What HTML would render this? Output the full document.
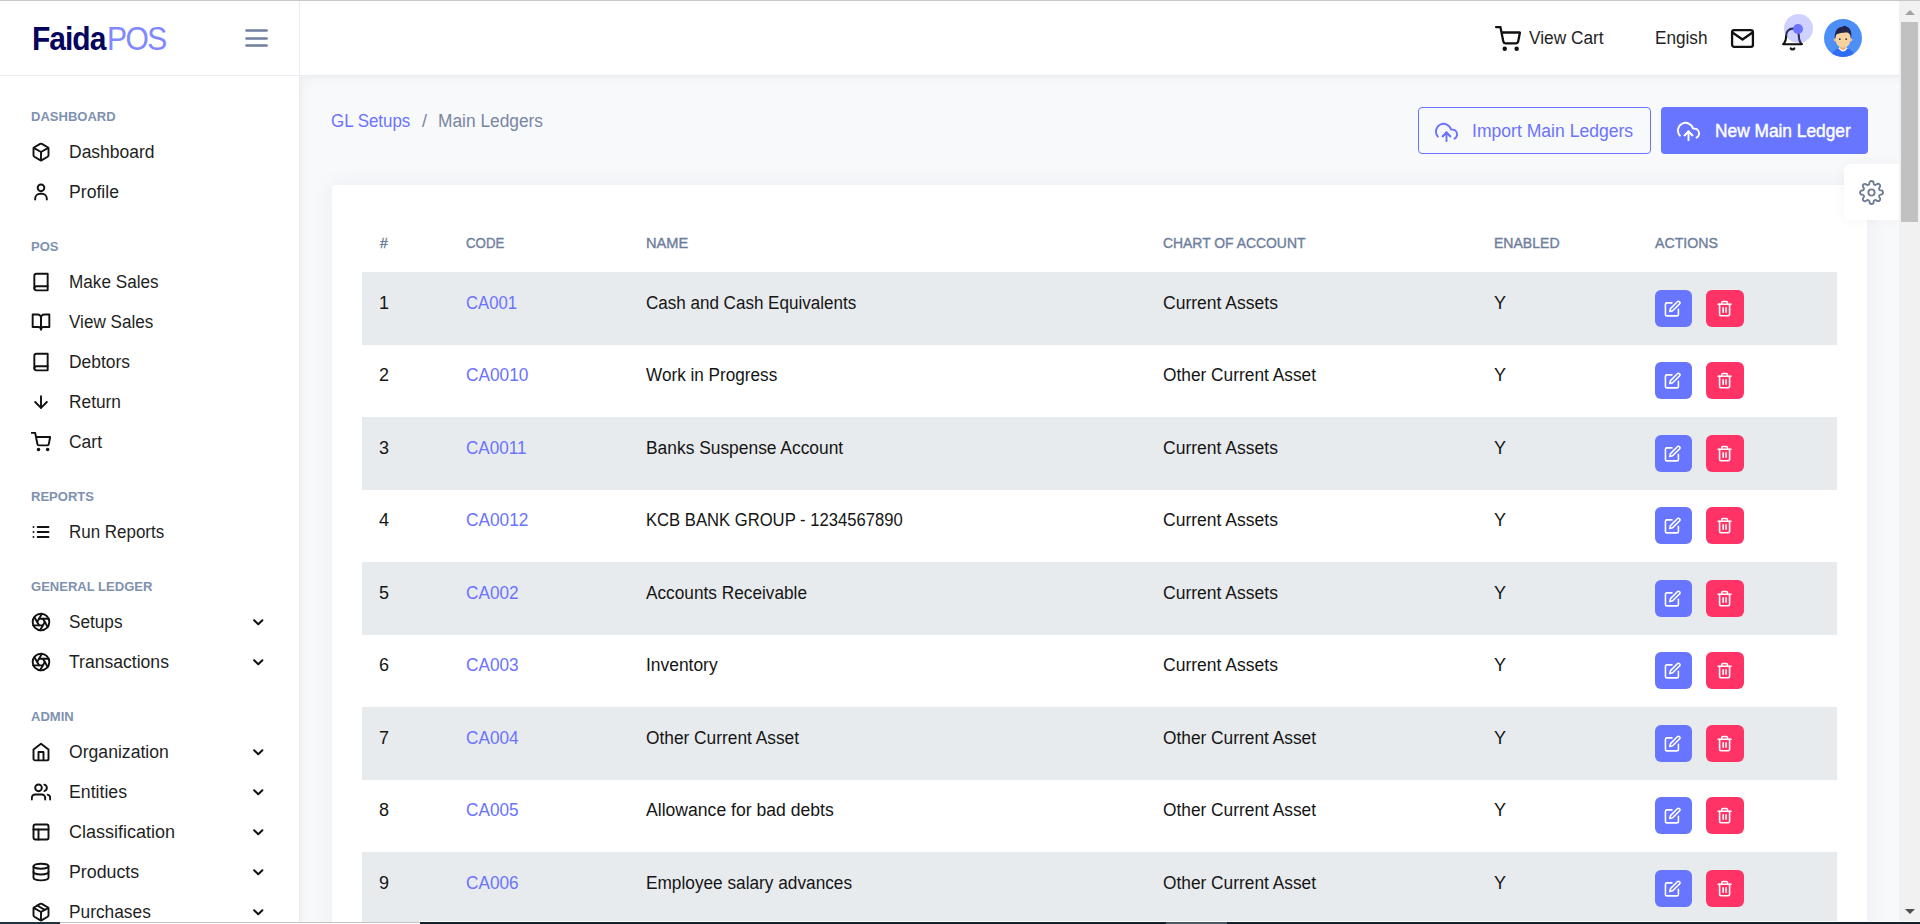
<!DOCTYPE html>
<html><head><meta charset="utf-8">
<style>
*{box-sizing:border-box;margin:0;padding:0}
html,body{width:1920px;height:924px;overflow:hidden;background:#fff;font-family:"Liberation Sans",sans-serif;color:#1a1a1a}
.abs{position:absolute}
#topline{left:0;top:0;width:1920px;height:1px;background:#c6c7c6;z-index:50}
#side{left:0;top:0;width:300px;height:924px;background:#fff;border-right:1px solid #e8ebef}
#sidehead{left:0;top:0;width:299px;height:76px;border-bottom:1px solid #e8ebef}
#logo{left:32px;top:16px;font-size:30px;line-height:40px;letter-spacing:-1px;white-space:nowrap;transform:scaleY(1.12);transform-origin:0 0}
#logo b{color:#05055d;font-weight:700}
#logo span{color:#8088ff;font-weight:400;margin-left:1.7px;letter-spacing:-1.6px}
#topbar{left:300px;top:0;width:1599px;height:76px;background:#fff;border-bottom:1px solid #e8ebef}
#main{left:300px;top:76px;width:1599px;height:848px;background:#f8f9fb;box-shadow:inset 8px 8px 10px -6px rgba(0,0,0,0.05)}
.lbl{position:absolute;left:31px;font-size:13.5px;font-weight:700;color:#8091b0;line-height:16px;transform:scaleX(0.965);transform-origin:0 0}
.item{position:absolute;left:31px;width:240px;height:40px;font-size:18px;color:#1f1f1f;line-height:40px}
.item svg{position:absolute;left:0;top:10px;width:20px;height:20px;fill:none;stroke:#111;stroke-width:2.3;stroke-linecap:round;stroke-linejoin:round}
.item .t{position:absolute;left:38px;top:0;transform-origin:0 0;white-space:nowrap}
.item svg.chev{left:219.2px;top:12.4px;width:16.5px;height:16.5px;stroke-width:2.9}
.hic{position:absolute;fill:none;stroke:#111;stroke-width:2;stroke-linecap:round;stroke-linejoin:round}
.htxt{position:absolute;top:26px;font-size:18px;line-height:24px;color:#1f1f1f;white-space:nowrap;transform-origin:0 0}
#avatar{left:1524px;top:19px;width:38px;height:38px;border-radius:50%;background:#4b8ff7}
.crumb{font-size:18px;line-height:22px;white-space:nowrap;transform-origin:0 0}
.obtn{border:1px solid #6b73ff;border-radius:4px;color:#6b73ff;font-size:18px;line-height:20px;white-space:nowrap}
.pbtn{background:#6875ff;border-radius:4px;color:#fff;font-size:18px;font-weight:700;line-height:20px;white-space:nowrap}
.obtn svg,.pbtn svg{position:absolute;fill:none;stroke:currentColor;stroke-width:2;stroke-linecap:round;stroke-linejoin:round}
#card{left:332px;top:185px;width:1535px;height:760px;background:#fff;border-radius:4px;box-shadow:0 0 24px rgba(40,50,80,0.06)}
.th{position:absolute;top:233.5px;font-size:15px;font-weight:400;-webkit-text-stroke:0.4px #6f7e9c;color:#6f7e9c;line-height:18px;white-space:nowrap;transform-origin:0 0}
.row{position:absolute;left:362px;width:1475px;height:72.5px}
.row.s{background:#e8ebee}
.cell{position:absolute;font-size:18px;line-height:20px;white-space:nowrap;color:#151515;transform-origin:0 0}
.code{color:#6b73ff}
.btn{position:absolute;width:37px;height:37px;border-radius:6px}
.btn svg{position:absolute;fill:none;stroke:#fff;stroke-width:2.2;stroke-linecap:round;stroke-linejoin:round}
.be{background:#6875ff}
.bd{background:#ff3366}
#geartab{left:1844px;top:164px;width:55px;height:56px;background:#fff;border-radius:6px 0 0 6px;box-shadow:0 0 12px rgba(40,50,80,0.05)}
#geartab svg{position:absolute;fill:none;stroke:#6f7c96;stroke-width:1.8;stroke-linecap:round;stroke-linejoin:round}
#sbtrack{left:1899px;top:1px;width:21px;height:923px;background:#f1f1f1}
#sbthumb{left:1901px;top:22px;width:17px;height:200px;background:#c1c1c1}
#bottomline{left:0;top:923px;width:1920px;height:1px;background:#1e2a30}

</style></head><body>
<div id="topline" class="abs"></div>
<div id="side" class="abs">
  <div id="sidehead" class="abs"></div>
  <div id="logo" class="abs"><b>Faida</b><span>POS</span></div>
  <svg class="abs" style="left:244px;top:27px;width:26px;height:22px" viewBox="0 0 26 22"><g stroke="#6f7e9c" stroke-width="2.7" stroke-linecap="round"><line x1="2.6" y1="3.5" x2="22.5" y2="3.5"/><line x1="2.6" y1="11.5" x2="22.5" y2="11.5"/><line x1="2.6" y1="18.5" x2="22.5" y2="18.5"/></g></svg>
  <div class="lbl" style="top:109px">DASHBOARD</div><div class="item" style="top:132px"><svg class="" style="" viewBox="0 0 24 24" ><path d="M21 16V8a2 2 0 0 0-1-1.73l-7-4a2 2 0 0 0-2 0l-7 4A2 2 0 0 0 3 8v8a2 2 0 0 0 1 1.73l7 4a2 2 0 0 0 2 0l7-4A2 2 0 0 0 21 16z"/><polyline points="3.27 6.96 12 12.01 20.73 6.96"/><line x1="12" y1="22.08" x2="12" y2="12"/></svg><span class="t" style="transform:scaleX(0.972)">Dashboard</span></div><div class="item" style="top:172px"><svg class="" style="" viewBox="0 0 24 24" ><circle cx="12" cy="7" r="4"/><path d="M5 21v-1a6 6 0 0 1 6-6h2a6 6 0 0 1 6 6v1"/></svg><span class="t" style="transform:scaleX(0.98)">Profile</span></div><div class="lbl" style="top:239px">POS</div><div class="item" style="top:262px"><svg class="" style="" viewBox="0 0 24 24" ><path d="M4 19.5A2.5 2.5 0 0 1 6.5 17H20"/><path d="M6.5 2H20v20H6.5A2.5 2.5 0 0 1 4 19.5v-15A2.5 2.5 0 0 1 6.5 2z"/></svg><span class="t" style="transform:scaleX(0.953)">Make Sales</span></div><div class="item" style="top:302px"><svg class="" style="" viewBox="0 0 24 24" ><path d="M2 3h6a4 4 0 0 1 4 4v14a3 3 0 0 0-3-3H2z"/><path d="M22 3h-6a4 4 0 0 0-4 4v14a3 3 0 0 1 3-3h7z"/></svg><span class="t" style="transform:scaleX(0.95)">View Sales</span></div><div class="item" style="top:342px"><svg class="" style="" viewBox="0 0 24 24" ><path d="M4 19.5A2.5 2.5 0 0 1 6.5 17H20"/><path d="M6.5 2H20v20H6.5A2.5 2.5 0 0 1 4 19.5v-15A2.5 2.5 0 0 1 6.5 2z"/></svg><span class="t" style="transform:scaleX(0.968)">Debtors</span></div><div class="item" style="top:382px"><svg class="" style="" viewBox="0 0 24 24" ><line x1="12" y1="5" x2="12" y2="19"/><polyline points="19 12 12 19 5 12"/></svg><span class="t" style="transform:scaleX(0.962)">Return</span></div><div class="item" style="top:422px"><svg class="" style="" viewBox="0 0 24 24" ><circle cx="9" cy="21" r="1"/><circle cx="20" cy="21" r="1"/><path d="M1 1h4l2.68 13.39a2 2 0 0 0 2 1.61h9.72a2 2 0 0 0 2-1.61L23 6H6"/></svg><span class="t" style="transform:scaleX(0.97)">Cart</span></div><div class="lbl" style="top:489px">REPORTS</div><div class="item" style="top:512px"><svg class="" style="" viewBox="0 0 24 24" ><line x1="8" y1="6" x2="21" y2="6"/><line x1="8" y1="12" x2="21" y2="12"/><line x1="8" y1="18" x2="21" y2="18"/><line x1="3" y1="6" x2="3.01" y2="6"/><line x1="3" y1="12" x2="3.01" y2="12"/><line x1="3" y1="18" x2="3.01" y2="18"/></svg><span class="t" style="transform:scaleX(0.942)">Run Reports</span></div><div class="lbl" style="top:579px">GENERAL LEDGER</div><div class="item" style="top:602px"><svg class="" style="" viewBox="0 0 24 24" ><circle cx="12" cy="12" r="10"/><line x1="14.31" y1="8" x2="20.05" y2="17.94"/><line x1="9.69" y1="8" x2="21.17" y2="8"/><line x1="7.38" y1="12" x2="13.12" y2="2.06"/><line x1="9.69" y1="16" x2="3.95" y2="6.06"/><line x1="14.31" y1="16" x2="2.83" y2="16"/><line x1="16.62" y1="12" x2="10.88" y2="21.94"/></svg><span class="t" style="transform:scaleX(0.955)">Setups</span><svg class="chev" style="" viewBox="0 0 24 24" ><polyline points="6 9 12 15 18 9"/></svg></div><div class="item" style="top:642px"><svg class="" style="" viewBox="0 0 24 24" ><circle cx="12" cy="12" r="10"/><line x1="14.31" y1="8" x2="20.05" y2="17.94"/><line x1="9.69" y1="8" x2="21.17" y2="8"/><line x1="7.38" y1="12" x2="13.12" y2="2.06"/><line x1="9.69" y1="16" x2="3.95" y2="6.06"/><line x1="14.31" y1="16" x2="2.83" y2="16"/><line x1="16.62" y1="12" x2="10.88" y2="21.94"/></svg><span class="t" style="transform:scaleX(0.976)">Transactions</span><svg class="chev" style="" viewBox="0 0 24 24" ><polyline points="6 9 12 15 18 9"/></svg></div><div class="lbl" style="top:709px">ADMIN</div><div class="item" style="top:732px"><svg class="" style="" viewBox="0 0 24 24" ><path d="M3 9l9-7 9 7v11a2 2 0 0 1-2 2H5a2 2 0 0 1-2-2z"/><polyline points="9 22 9 12 15 12 15 22"/></svg><span class="t" style="transform:scaleX(0.978)">Organization</span><svg class="chev" style="" viewBox="0 0 24 24" ><polyline points="6 9 12 15 18 9"/></svg></div><div class="item" style="top:772px"><svg class="" style="" viewBox="0 0 24 24" ><path d="M17 21v-2a4 4 0 0 0-4-4H5a4 4 0 0 0-4 4v2"/><circle cx="9" cy="7" r="4"/><path d="M23 21v-2a4 4 0 0 0-3-3.87"/><path d="M16 3.13a4 4 0 0 1 0 7.75"/></svg><span class="t" style="transform:scaleX(0.983)">Entities</span><svg class="chev" style="" viewBox="0 0 24 24" ><polyline points="6 9 12 15 18 9"/></svg></div><div class="item" style="top:812px"><svg class="" style="" viewBox="0 0 24 24" ><rect x="3" y="3" width="18" height="18" rx="2" ry="2"/><line x1="3" y1="9" x2="21" y2="9"/><line x1="9" y1="21" x2="9" y2="9"/></svg><span class="t" style="transform:scaleX(1.0)">Classification</span><svg class="chev" style="" viewBox="0 0 24 24" ><polyline points="6 9 12 15 18 9"/></svg></div><div class="item" style="top:852px"><svg class="" style="" viewBox="0 0 24 24" ><ellipse cx="12" cy="5" rx="9" ry="3"/><path d="M21 12c0 1.66-4 3-9 3s-9-1.34-9-3"/><path d="M3 5v14c0 1.66 4 3 9 3s9-1.34 9-3V5"/></svg><span class="t" style="transform:scaleX(0.987)">Products</span><svg class="chev" style="" viewBox="0 0 24 24" ><polyline points="6 9 12 15 18 9"/></svg></div><div class="item" style="top:892px"><svg class="" style="" viewBox="0 0 24 24" ><line x1="16.5" y1="9.4" x2="7.5" y2="4.21"/><path d="M21 16V8a2 2 0 0 0-1-1.73l-7-4a2 2 0 0 0-2 0l-7 4A2 2 0 0 0 3 8v8a2 2 0 0 0 1 1.73l7 4a2 2 0 0 0 2 0l7-4A2 2 0 0 0 21 16z"/><polyline points="3.27 6.96 12 12.01 20.73 6.96"/><line x1="12" y1="22.08" x2="12" y2="12"/></svg><span class="t" style="transform:scaleX(0.962)">Purchases</span><svg class="chev" style="" viewBox="0 0 24 24" ><polyline points="6 9 12 15 18 9"/></svg></div>
</div>
<div id="topbar" class="abs">
  <svg class="hic" style="left:1195px;top:26px;width:26px;height:26px;stroke-width:2.1" viewBox="0 0 24 24" ><circle cx="9" cy="21" r="1"/><circle cx="20" cy="21" r="1"/><path d="M1 1h4l2.68 13.39a2 2 0 0 0 2 1.61h9.72a2 2 0 0 0 2-1.61L23 6H6"/></svg>
  <div class="htxt" style="left:1229px;transform:scaleX(0.96)">View Cart</div>
  <div class="htxt" style="left:1354.5px;transform:scaleX(0.953)">Engish</div>
  <svg class="hic" style="left:1430px;top:26px;width:25px;height:25px;stroke-width:2.2" viewBox="0 0 24 24" ><rect x="2" y="4" width="20" height="16" rx="2"/><polyline points="2 6 12 13 22 6"/></svg>
  <svg class="abs hic" style="left:1480px;top:25.5px;width:25px;height:26px" viewBox="0 0 24 24"><path d="M18 8A6 6 0 0 0 6 8c0 7-3 9-3 9h18s-3-2-3-9"/><path d="M13.73 21a2 2 0 0 1-3.46 0"/></svg>
  <div class="abs" style="left:1484px;top:14px;width:29px;height:29px;border-radius:50%;background:rgba(108,116,255,0.33)"></div>
  <div class="abs" style="left:1493px;top:24px;width:10px;height:10px;border-radius:50%;background:#6b73ff"></div>
  <svg class="abs" style="left:1524px;top:19px;width:38px;height:38px" viewBox="0 0 38 38"><defs><clipPath id="avc"><circle cx="19" cy="19" r="19"/></clipPath></defs><g clip-path="url(#avc)"><rect width="38" height="38" fill="#4b8ff7"/><path d="M7 40 Q8 30.5 15 29.5 H23 Q30 30.5 31 40 Z" fill="#2f6df2"/><path d="M14.5 29.6 Q19 35.5 23.5 29.6 L22.5 28.2 H15.5 Z" fill="#fff"/><path d="M16 24 H22 V29.5 Q19 33 16 29.5 Z" fill="#eeb27c"/><circle cx="11.3" cy="20.8" r="1.7" fill="#f3c48c"/><circle cx="26.7" cy="20.8" r="1.7" fill="#f3c48c"/><rect x="11.8" y="11.5" width="14.4" height="17" rx="6.5" fill="#f8d3a0"/><path d="M10.8 20.5 Q10 8.5 18.5 7.8 Q20.5 5.8 22.8 7.8 Q28.2 9.2 27.4 20.5 Q26.8 14.5 23.5 13.6 Q17 13.2 12.6 15.2 Q11.3 17 10.8 20.5Z" fill="#23244a"/><circle cx="15.8" cy="20.2" r="0.9" fill="#3b3a55"/><circle cx="22.2" cy="20.2" r="0.9" fill="#3b3a55"/></g></svg>
</div>
<div id="main" class="abs">
</div>
<div class="abs crumb" style="left:331.4px;top:110px;color:#6b73ff;transform:scaleX(0.94)">GL Setups</div><div class="abs crumb" style="left:422px;top:110px;color:#7886a3">/</div><div class="abs crumb" style="left:437.8px;top:110px;color:#7886a3;transform:scaleX(0.963)">Main Ledgers</div>
<div class="abs obtn" style="left:1418px;top:107px;width:233px;height:47px"><svg class="" style="left:16.2px;top:12.8px;width:23px;height:23px" viewBox="0 0 24 24" ><polyline points="16 16 12 12 8 16"/><line x1="12" y1="12" x2="12" y2="21"/><path d="M20.39 18.39A5 5 0 0 0 18 9h-1.26A8 8 0 1 0 3 16.3"/><polyline points="16 16 12 12 8 16"/></svg><span style="position:absolute;left:53px;top:13px;transform:scaleX(0.976);transform-origin:0 0">Import Main Ledgers</span></div>
<div class="abs pbtn" style="left:1661px;top:107px;width:207px;height:47px"><svg class="" style="left:16.2px;top:12.8px;width:23px;height:23px" viewBox="0 0 24 24" ><polyline points="16 16 12 12 8 16"/><line x1="12" y1="12" x2="12" y2="21"/><path d="M20.39 18.39A5 5 0 0 0 18 9h-1.26A8 8 0 1 0 3 16.3"/><polyline points="16 16 12 12 8 16"/></svg><span style="position:absolute;left:53.8px;top:13.5px;transform:scaleX(0.962);transform-origin:0 0;font-weight:400;-webkit-text-stroke:0.45px #fff">New Main Ledger</span></div>
<div id="card" class="abs"></div>
<div class="th" style="left:380px;transform:scaleX(0.93)">#</div>
<div class="th" style="left:466px;transform:scaleX(0.884)">CODE</div>
<div class="th" style="left:646px;transform:scaleX(0.975)">NAME</div>
<div class="th" style="left:1163px;transform:scaleX(0.927)">CHART OF ACCOUNT</div>
<div class="th" style="left:1494.3px;transform:scaleX(0.936)">ENABLED</div>
<div class="th" style="left:1654.6px;transform:scaleX(0.944)">ACTIONS</div>
<div class="row s" style="top:272.0px"></div><div class="cell" style="left:379px;top:293px">1</div><div class="cell code" style="left:465.5px;top:293px;transform:scaleX(0.926)">CA001</div><div class="cell" style="left:645.6px;top:293px;transform:scaleX(0.946)">Cash and Cash Equivalents</div><div class="cell" style="left:1163px;top:293px;transform:scaleX(0.974)">Current Assets</div><div class="cell" style="left:1494px;top:293px">Y</div><div class="btn be" style="left:1655px;top:290px"><svg class="" style="left:9.4px;top:9.8px;width:17.3px;height:17.3px" viewBox="0 0 24 24" ><path d="M11 4H4a2 2 0 0 0-2 2v14a2 2 0 0 0 2 2h14a2 2 0 0 0 2-2v-7"/><path d="M18.5 2.5a2.121 2.121 0 0 1 3 3L12 15l-4 1 1-4 9.5-9.5z"/></svg></div><div class="btn bd" style="left:1706px;top:290px;width:38px"><svg class="" style="left:10.3px;top:10.1px;width:17.2px;height:17.2px" viewBox="0 0 24 24" ><polyline points="3 6 5 6 21 6"/><path d="M19 6v14a2 2 0 0 1-2 2H7a2 2 0 0 1-2-2V6m3 0V4a2 2 0 0 1 2-2h4a2 2 0 0 1 2 2v2"/><line x1="10" y1="11" x2="10" y2="17"/><line x1="14" y1="11" x2="14" y2="17"/></svg></div><div class="row" style="top:344.5px"></div><div class="cell" style="left:379px;top:365px">2</div><div class="cell code" style="left:465.5px;top:365px;transform:scaleX(0.96)">CA0010</div><div class="cell" style="left:645.6px;top:365px;transform:scaleX(0.953)">Work in Progress</div><div class="cell" style="left:1163px;top:365px;transform:scaleX(0.962)">Other Current Asset</div><div class="cell" style="left:1494px;top:365px">Y</div><div class="btn be" style="left:1655px;top:362px"><svg class="" style="left:9.4px;top:9.8px;width:17.3px;height:17.3px" viewBox="0 0 24 24" ><path d="M11 4H4a2 2 0 0 0-2 2v14a2 2 0 0 0 2 2h14a2 2 0 0 0 2-2v-7"/><path d="M18.5 2.5a2.121 2.121 0 0 1 3 3L12 15l-4 1 1-4 9.5-9.5z"/></svg></div><div class="btn bd" style="left:1706px;top:362px;width:38px"><svg class="" style="left:10.3px;top:10.1px;width:17.2px;height:17.2px" viewBox="0 0 24 24" ><polyline points="3 6 5 6 21 6"/><path d="M19 6v14a2 2 0 0 1-2 2H7a2 2 0 0 1-2-2V6m3 0V4a2 2 0 0 1 2-2h4a2 2 0 0 1 2 2v2"/><line x1="10" y1="11" x2="10" y2="17"/><line x1="14" y1="11" x2="14" y2="17"/></svg></div><div class="row s" style="top:417.0px"></div><div class="cell" style="left:379px;top:438px">3</div><div class="cell code" style="left:465.5px;top:438px;transform:scaleX(0.95)">CA0011</div><div class="cell" style="left:645.6px;top:438px;transform:scaleX(0.966)">Banks Suspense Account</div><div class="cell" style="left:1163px;top:438px;transform:scaleX(0.974)">Current Assets</div><div class="cell" style="left:1494px;top:438px">Y</div><div class="btn be" style="left:1655px;top:435px"><svg class="" style="left:9.4px;top:9.8px;width:17.3px;height:17.3px" viewBox="0 0 24 24" ><path d="M11 4H4a2 2 0 0 0-2 2v14a2 2 0 0 0 2 2h14a2 2 0 0 0 2-2v-7"/><path d="M18.5 2.5a2.121 2.121 0 0 1 3 3L12 15l-4 1 1-4 9.5-9.5z"/></svg></div><div class="btn bd" style="left:1706px;top:435px;width:38px"><svg class="" style="left:10.3px;top:10.1px;width:17.2px;height:17.2px" viewBox="0 0 24 24" ><polyline points="3 6 5 6 21 6"/><path d="M19 6v14a2 2 0 0 1-2 2H7a2 2 0 0 1-2-2V6m3 0V4a2 2 0 0 1 2-2h4a2 2 0 0 1 2 2v2"/><line x1="10" y1="11" x2="10" y2="17"/><line x1="14" y1="11" x2="14" y2="17"/></svg></div><div class="row" style="top:489.5px"></div><div class="cell" style="left:379px;top:510px">4</div><div class="cell code" style="left:465.5px;top:510px;transform:scaleX(0.96)">CA0012</div><div class="cell" style="left:645.6px;top:510px;transform:scaleX(0.924)">KCB BANK GROUP - 1234567890</div><div class="cell" style="left:1163px;top:510px;transform:scaleX(0.974)">Current Assets</div><div class="cell" style="left:1494px;top:510px">Y</div><div class="btn be" style="left:1655px;top:507px"><svg class="" style="left:9.4px;top:9.8px;width:17.3px;height:17.3px" viewBox="0 0 24 24" ><path d="M11 4H4a2 2 0 0 0-2 2v14a2 2 0 0 0 2 2h14a2 2 0 0 0 2-2v-7"/><path d="M18.5 2.5a2.121 2.121 0 0 1 3 3L12 15l-4 1 1-4 9.5-9.5z"/></svg></div><div class="btn bd" style="left:1706px;top:507px;width:38px"><svg class="" style="left:10.3px;top:10.1px;width:17.2px;height:17.2px" viewBox="0 0 24 24" ><polyline points="3 6 5 6 21 6"/><path d="M19 6v14a2 2 0 0 1-2 2H7a2 2 0 0 1-2-2V6m3 0V4a2 2 0 0 1 2-2h4a2 2 0 0 1 2 2v2"/><line x1="10" y1="11" x2="10" y2="17"/><line x1="14" y1="11" x2="14" y2="17"/></svg></div><div class="row s" style="top:562.0px"></div><div class="cell" style="left:379px;top:583px">5</div><div class="cell code" style="left:465.5px;top:583px;transform:scaleX(0.955)">CA002</div><div class="cell" style="left:645.6px;top:583px;transform:scaleX(0.958)">Accounts Receivable</div><div class="cell" style="left:1163px;top:583px;transform:scaleX(0.974)">Current Assets</div><div class="cell" style="left:1494px;top:583px">Y</div><div class="btn be" style="left:1655px;top:580px"><svg class="" style="left:9.4px;top:9.8px;width:17.3px;height:17.3px" viewBox="0 0 24 24" ><path d="M11 4H4a2 2 0 0 0-2 2v14a2 2 0 0 0 2 2h14a2 2 0 0 0 2-2v-7"/><path d="M18.5 2.5a2.121 2.121 0 0 1 3 3L12 15l-4 1 1-4 9.5-9.5z"/></svg></div><div class="btn bd" style="left:1706px;top:580px;width:38px"><svg class="" style="left:10.3px;top:10.1px;width:17.2px;height:17.2px" viewBox="0 0 24 24" ><polyline points="3 6 5 6 21 6"/><path d="M19 6v14a2 2 0 0 1-2 2H7a2 2 0 0 1-2-2V6m3 0V4a2 2 0 0 1 2-2h4a2 2 0 0 1 2 2v2"/><line x1="10" y1="11" x2="10" y2="17"/><line x1="14" y1="11" x2="14" y2="17"/></svg></div><div class="row" style="top:634.5px"></div><div class="cell" style="left:379px;top:655px">6</div><div class="cell code" style="left:465.5px;top:655px;transform:scaleX(0.955)">CA003</div><div class="cell" style="left:645.6px;top:655px;transform:scaleX(0.967)">Inventory</div><div class="cell" style="left:1163px;top:655px;transform:scaleX(0.974)">Current Assets</div><div class="cell" style="left:1494px;top:655px">Y</div><div class="btn be" style="left:1655px;top:652px"><svg class="" style="left:9.4px;top:9.8px;width:17.3px;height:17.3px" viewBox="0 0 24 24" ><path d="M11 4H4a2 2 0 0 0-2 2v14a2 2 0 0 0 2 2h14a2 2 0 0 0 2-2v-7"/><path d="M18.5 2.5a2.121 2.121 0 0 1 3 3L12 15l-4 1 1-4 9.5-9.5z"/></svg></div><div class="btn bd" style="left:1706px;top:652px;width:38px"><svg class="" style="left:10.3px;top:10.1px;width:17.2px;height:17.2px" viewBox="0 0 24 24" ><polyline points="3 6 5 6 21 6"/><path d="M19 6v14a2 2 0 0 1-2 2H7a2 2 0 0 1-2-2V6m3 0V4a2 2 0 0 1 2-2h4a2 2 0 0 1 2 2v2"/><line x1="10" y1="11" x2="10" y2="17"/><line x1="14" y1="11" x2="14" y2="17"/></svg></div><div class="row s" style="top:707.0px"></div><div class="cell" style="left:379px;top:728px">7</div><div class="cell code" style="left:465.5px;top:728px;transform:scaleX(0.955)">CA004</div><div class="cell" style="left:645.6px;top:728px;transform:scaleX(0.962)">Other Current Asset</div><div class="cell" style="left:1163px;top:728px;transform:scaleX(0.962)">Other Current Asset</div><div class="cell" style="left:1494px;top:728px">Y</div><div class="btn be" style="left:1655px;top:725px"><svg class="" style="left:9.4px;top:9.8px;width:17.3px;height:17.3px" viewBox="0 0 24 24" ><path d="M11 4H4a2 2 0 0 0-2 2v14a2 2 0 0 0 2 2h14a2 2 0 0 0 2-2v-7"/><path d="M18.5 2.5a2.121 2.121 0 0 1 3 3L12 15l-4 1 1-4 9.5-9.5z"/></svg></div><div class="btn bd" style="left:1706px;top:725px;width:38px"><svg class="" style="left:10.3px;top:10.1px;width:17.2px;height:17.2px" viewBox="0 0 24 24" ><polyline points="3 6 5 6 21 6"/><path d="M19 6v14a2 2 0 0 1-2 2H7a2 2 0 0 1-2-2V6m3 0V4a2 2 0 0 1 2-2h4a2 2 0 0 1 2 2v2"/><line x1="10" y1="11" x2="10" y2="17"/><line x1="14" y1="11" x2="14" y2="17"/></svg></div><div class="row" style="top:779.5px"></div><div class="cell" style="left:379px;top:800px">8</div><div class="cell code" style="left:465.5px;top:800px;transform:scaleX(0.955)">CA005</div><div class="cell" style="left:645.6px;top:800px;transform:scaleX(0.977)">Allowance for bad debts</div><div class="cell" style="left:1163px;top:800px;transform:scaleX(0.962)">Other Current Asset</div><div class="cell" style="left:1494px;top:800px">Y</div><div class="btn be" style="left:1655px;top:797px"><svg class="" style="left:9.4px;top:9.8px;width:17.3px;height:17.3px" viewBox="0 0 24 24" ><path d="M11 4H4a2 2 0 0 0-2 2v14a2 2 0 0 0 2 2h14a2 2 0 0 0 2-2v-7"/><path d="M18.5 2.5a2.121 2.121 0 0 1 3 3L12 15l-4 1 1-4 9.5-9.5z"/></svg></div><div class="btn bd" style="left:1706px;top:797px;width:38px"><svg class="" style="left:10.3px;top:10.1px;width:17.2px;height:17.2px" viewBox="0 0 24 24" ><polyline points="3 6 5 6 21 6"/><path d="M19 6v14a2 2 0 0 1-2 2H7a2 2 0 0 1-2-2V6m3 0V4a2 2 0 0 1 2-2h4a2 2 0 0 1 2 2v2"/><line x1="10" y1="11" x2="10" y2="17"/><line x1="14" y1="11" x2="14" y2="17"/></svg></div><div class="row s" style="top:852.0px"></div><div class="cell" style="left:379px;top:873px">9</div><div class="cell code" style="left:465.5px;top:873px;transform:scaleX(0.955)">CA006</div><div class="cell" style="left:645.6px;top:873px;transform:scaleX(0.958)">Employee salary advances</div><div class="cell" style="left:1163px;top:873px;transform:scaleX(0.962)">Other Current Asset</div><div class="cell" style="left:1494px;top:873px">Y</div><div class="btn be" style="left:1655px;top:870px"><svg class="" style="left:9.4px;top:9.8px;width:17.3px;height:17.3px" viewBox="0 0 24 24" ><path d="M11 4H4a2 2 0 0 0-2 2v14a2 2 0 0 0 2 2h14a2 2 0 0 0 2-2v-7"/><path d="M18.5 2.5a2.121 2.121 0 0 1 3 3L12 15l-4 1 1-4 9.5-9.5z"/></svg></div><div class="btn bd" style="left:1706px;top:870px;width:38px"><svg class="" style="left:10.3px;top:10.1px;width:17.2px;height:17.2px" viewBox="0 0 24 24" ><polyline points="3 6 5 6 21 6"/><path d="M19 6v14a2 2 0 0 1-2 2H7a2 2 0 0 1-2-2V6m3 0V4a2 2 0 0 1 2-2h4a2 2 0 0 1 2 2v2"/><line x1="10" y1="11" x2="10" y2="17"/><line x1="14" y1="11" x2="14" y2="17"/></svg></div>
<div id="geartab" class="abs"><svg class="" style="left:14.5px;top:15.8px;width:25px;height:25px" viewBox="0 0 24 24" ><circle cx="12" cy="12" r="3"/><path d="M19.4 15a1.65 1.65 0 0 0 .33 1.82l.06.06a2 2 0 0 1 0 2.83 2 2 0 0 1-2.83 0l-.06-.06a1.65 1.65 0 0 0-1.82-.33 1.65 1.65 0 0 0-1 1.51V21a2 2 0 0 1-2 2 2 2 0 0 1-2-2v-.09A1.65 1.65 0 0 0 9 19.4a1.65 1.65 0 0 0-1.82.33l-.06.06a2 2 0 0 1-2.83 0 2 2 0 0 1 0-2.83l.06-.06a1.65 1.65 0 0 0 .33-1.82 1.65 1.65 0 0 0-1.51-1H3a2 2 0 0 1-2-2 2 2 0 0 1 2-2h.09A1.65 1.65 0 0 0 4.6 9a1.65 1.65 0 0 0-.33-1.82l-.06-.06a2 2 0 0 1 0-2.83 2 2 0 0 1 2.83 0l.06.06a1.65 1.65 0 0 0 1.82.33H9a1.65 1.65 0 0 0 1-1.51V3a2 2 0 0 1 2-2 2 2 0 0 1 2 2v.09a1.65 1.65 0 0 0 1 1.51 1.65 1.65 0 0 0 1.82-.33l.06-.06a2 2 0 0 1 2.83 0 2 2 0 0 1 0 2.83l-.06.06a1.65 1.65 0 0 0-.33 1.82V9a1.65 1.65 0 0 0 1.51 1H21a2 2 0 0 1 2 2 2 2 0 0 1-2 2h-.09a1.65 1.65 0 0 0-1.51 1z"/></svg></div>
<div id="sbtrack" class="abs"></div>
<div id="sbthumb" class="abs"></div>
<svg class="abs" style="left:1905px;top:9px;width:10px;height:8px" viewBox="0 0 10 8"><polygon points="0,6 5,1 10,6" fill="#a3a3a3"/></svg>
<svg class="abs" style="left:1904.5px;top:907px;width:10px;height:8px" viewBox="0 0 10 8"><polygon points="0,2 5,7 10,2" fill="#505050"/></svg>
<div class="abs" style="left:420px;top:921px;width:1500px;height:1px;background:#fff"></div>
<div class="abs" style="left:420px;top:922px;width:1500px;height:2px;background:#13212f"></div>
<div class="abs" style="left:1166px;top:922px;width:61px;height:2px;background:#4a5867"></div>
<div class="abs" style="left:0;top:922px;width:60px;height:2px;background:#1d3440"></div>
<div class="abs" style="left:60px;top:922px;width:360px;height:1px;background:#c4c4c4"></div>
<div class="abs" style="left:60px;top:923px;width:360px;height:1px;background:#fff"></div>
</body></html>
